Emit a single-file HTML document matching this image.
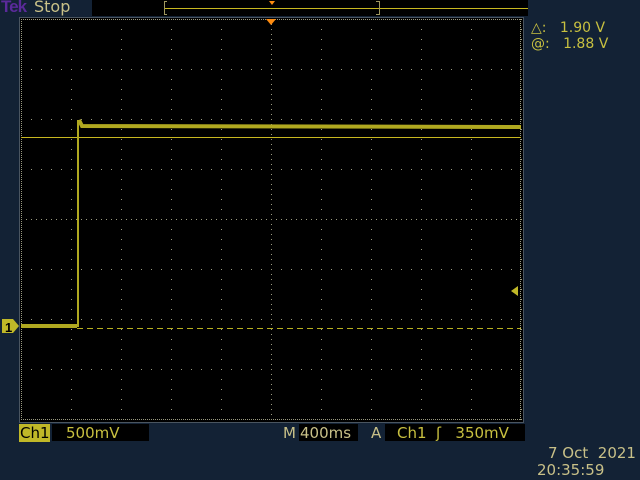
<!DOCTYPE html>
<html><head><style>
body{margin:0;width:640px;height:480px;background:#132235;overflow:hidden;position:relative;font-family:"DejaVu Sans","Liberation Sans",sans-serif}
.t{position:absolute;white-space:pre;font-size:15px;line-height:16px}
</style></head><body>
<svg width="640" height="480" style="position:absolute;left:0;top:0">
<defs>
<pattern id="hd" x="21" y="0" width="10" height="50" patternUnits="userSpaceOnUse"><rect x="0" y="19" width="1" height="1" fill="#9a9a80"/></pattern>
<pattern id="vd" x="0" y="19" width="50" height="10" patternUnits="userSpaceOnUse"><rect x="21" y="0" width="1" height="1" fill="#9a9a80"/></pattern>
</defs>
<rect x="19" y="17" width="505" height="406" fill="#4a5560"/>
<rect x="20" y="18" width="503" height="404" fill="#000"/>
<rect x="21" y="19" width="501" height="401" fill="url(#hd)"/>
<rect x="21" y="19" width="501" height="401" fill="url(#vd)"/>
<g stroke="#9a9a80" stroke-width="1" stroke-dasharray="1 1">
<line x1="21" y1="19.5" x2="521" y2="19.5"/><line x1="21" y1="419.5" x2="521" y2="419.5"/>
<line x1="21.5" y1="19" x2="21.5" y2="420"/><line x1="520.5" y1="19" x2="520.5" y2="420"/>
<line x1="21" y1="219.5" x2="521" y2="219.5" stroke-dasharray="1 4"/>
<line x1="271.5" y1="19" x2="271.5" y2="420" stroke-dasharray="1 4"/>
</g>
<rect x="21" y="137" width="500" height="1" fill="#c8b820"/>
<line x1="77" y1="328.5" x2="521" y2="328.5" stroke="#b8b020" stroke-width="1" stroke-dasharray="6 4"/>
<rect x="77" y="120" width="2" height="207" fill="#b0a820"/>
<polyline points="79,120 82,126 521,127" fill="none" stroke="#b0a820" stroke-width="4"/>
<polyline points="21,326 77,326" fill="none" stroke="#b0a820" stroke-width="4"/>
<polygon points="2,319 13,319 19,326 13,333 2,333" fill="#c0b828"/>
<text x="5" y="332" font-size="13" font-weight="bold" fill="#000" font-family="Liberation Sans">1</text>
<polygon points="511,291 518,286 518,296" fill="#c0b828"/>
<polygon points="266,19 276,19 271,25" fill="#ff8c10"/>
<rect x="92" y="0" width="436" height="16" fill="#000"/>
<rect x="165" y="8" width="363" height="1" fill="#c8b820"/>
<path d="M167,1.5 H164.5 V14.5 H167" fill="none" stroke="#a09860"/>
<path d="M376,1.5 H379.5 V14.5 H376" fill="none" stroke="#a09860"/>
<polygon points="269,1 275,1 272,5" fill="#ff8c10"/>
<rect x="19" y="424" width="31" height="18" fill="#c0b828"/>
<rect x="52" y="424" width="97" height="17" fill="#000"/>
<rect x="299" y="424" width="59" height="17" fill="#000"/>
<rect x="385" y="424" width="140" height="17" fill="#000"/>
</svg>
<div class="t" style="left:1px;top:-1px;color:#5a2a9a;font-weight:bold;font-size:17px;letter-spacing:-1px;font-family:'Liberation Sans',sans-serif">Tek</div>
<div class="t" style="top:-1px;left:34px;color:#c8c088;font-size:16px">Stop</div>
<div class="t" style="left:531px;top:20px;color:#c8c040;font-size:14px">△:   1.90 V</div>
<div class="t" style="left:531px;top:36px;color:#c8c040;font-size:14px">@:   1.88 V</div>
<div class="t" style="left:20px;top:425px;color:#000">Ch1</div>
<div class="t" style="left:66px;top:425px;color:#c8c040">500mV</div>
<div class="t" style="left:283px;top:425px;color:#c8c088">M</div>
<div class="t" style="left:300px;top:425px;color:#c8c088">400ms</div>
<div class="t" style="left:371px;top:425px;color:#c8c088">A</div>
<div class="t" style="left:397px;top:425px;color:#c8c040">Ch1  ʃ   350mV</div>
<div class="t" style="left:548px;top:445px;color:#c8c088">7 Oct  2021</div>
<div class="t" style="left:537px;top:462px;color:#c8c088">20:35:59</div>
</body></html>
